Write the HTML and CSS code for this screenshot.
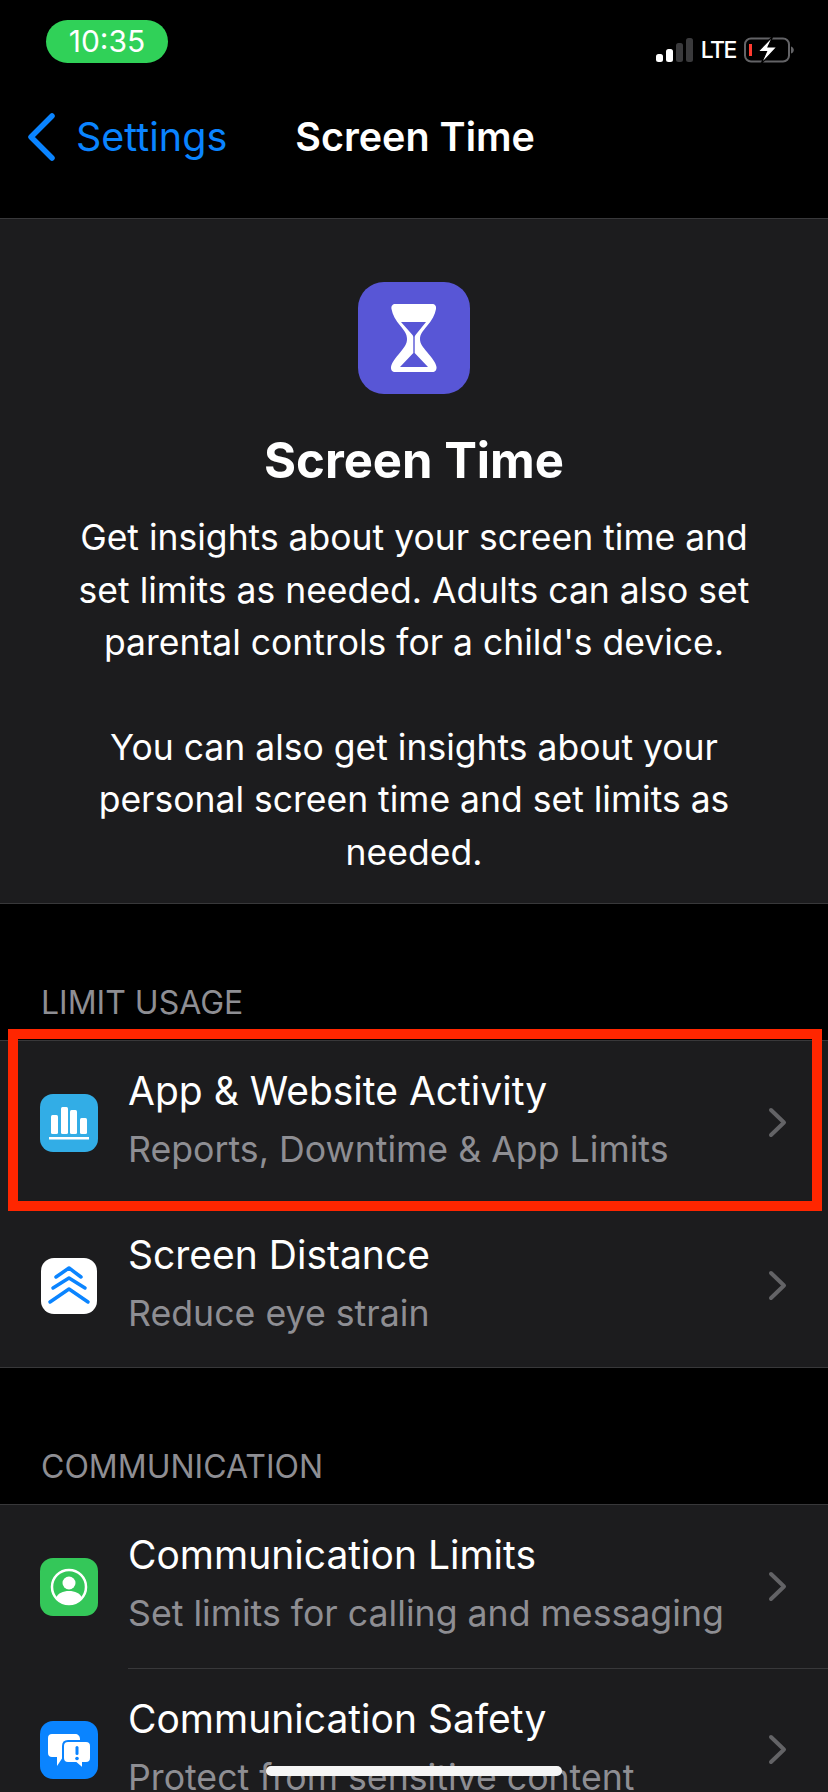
FILE: index.html
```html
<!DOCTYPE html>
<html lang="en">
<head>
    <meta charset="UTF-8">
    <meta name="viewport" content="width=device-width, initial-scale=1.0">
    <title>Screen Time</title>
    <link rel="stylesheet" href="styles.css">
</head>
<body>
    <header class="top">
        <div class="status">
            <span class="time">10:35</span>
            <div class="status-right">
                <svg class="signal" width="37" height="24" viewBox="0 0 37 24">
                    <rect x="0" y="16" width="7" height="8" rx="2.500" fill="#fff"/>
                    <rect x="10" y="11" width="7" height="13" rx="2.500" fill="#fff"/>
                    <rect x="20" y="5" width="7" height="19" rx="2.500" fill="#3a3a3c"/>
                    <rect x="30" y="0" width="7" height="24" rx="2.500" fill="#3a3a3c"/>
                </svg>
                <span class="lte">LTE</span>
                <svg class="battery" width="50" height="28" viewBox="0 0 50 28">
                    <rect x="1" y="2.500" width="44" height="23" rx="6" fill="none" stroke="#636366" stroke-width="2"/>
                    <rect x="5" y="8" width="3" height="12" fill="#ff3b30"/>
                    <path d="M47 10.500c1.800 .5 2.800 2 2.800 3.500s-1 3-2.800 3.500z" fill="#636366"/>
                    <path d="M29 0L14 15.500h8.500L17 28 33 11h-9z" fill="#fff" stroke="#000" stroke-width="1.200"/>
                </svg>
            </div>
        </div>
        <nav class="nav">
            <a class="back" href="#">
                <svg width="30" height="48" viewBox="0 0 30 48"><path d="M26 3L5 24l21 21" fill="none" stroke="#0a84ff" stroke-width="5.500" stroke-linecap="round" stroke-linejoin="round"/></svg>
                <span>Settings</span>
            </a>
            <h2>Screen Time</h2>
        </nav>
    </header>

    <section class="intro">
        <div class="app-icon">
            <svg width="112" height="112" viewBox="0 0 112 112">
                <path d="M37 22h37c3 0 4.500 2 4 5-1 6-4 11-9 17-4 5-7 8-7 13s3 8 7 13c5 6 9 11 9.500 15 .3 3-1.500 5-4 5H37c-2.500 0-4.300-2-4-5 .5-4 4.500-9 9.500-15 4-5 6.500-8 6.500-13s-2.500-8-6.500-13c-5-6-8-11-9-17-.5-3 1-5 4-5z" fill="#fff"/>
                <path d="M43 40h25L57.500 53c-.8 1-.8 2-.8 3v15L70 85H42l13.300-14V56c0-1 0-2-.8-3z" fill="#5856d6"/>
            </svg>
        </div>
        <h1>Screen Time</h1>
        <p>Get insights about your screen time and<br>set limits as needed. Adults can also set<br>parental controls for a child's device.</p>
        <p>You can also get insights about your<br>personal screen time and set limits as<br>needed.</p>
    </section>

    <div class="label">LIMIT USAGE</div>
    <ul class="group">
        <li class="row">
            <span class="icon icon-blue">
                <svg width="58" height="58" viewBox="0 0 58 58">
                    <rect x="11" y="21" width="7" height="19" rx="1.500" fill="#fff"/>
                    <rect x="21" y="13" width="7" height="27" rx="1.500" fill="#fff"/>
                    <rect x="30" y="16" width="7" height="24" rx="1.500" fill="#fff"/>
                    <rect x="40" y="24" width="7" height="16" rx="1.500" fill="#fff"/>
                    <rect x="9" y="43" width="40" height="2.500" fill="#fff"/>
                </svg>
            </span>
            <div class="text">
                <div class="name">App &amp; Website Activity</div>
                <div class="sub">Reports, Downtime &amp; App Limits</div>
            </div>
            <svg class="chev" width="19" height="31" viewBox="0 0 19 31"><path d="M3 3l13 12.500L3 28" fill="none" stroke="#636366" stroke-width="4" stroke-linecap="round" stroke-linejoin="round"/></svg>
        </li>
        <li class="row">
            <span class="icon icon-white">
                <svg width="56" height="56" viewBox="0 0 56 56">
                    <g fill="none" stroke="#0a84ff" stroke-width="3.500" stroke-linecap="round" stroke-linejoin="round">
                        <path d="M15 19l13-9 12 9"/>
                        <path d="M12 30l16-10 16 10"/>
                        <path d="M9 44l19-13 19 13"/>
                    </g>
                </svg>
            </span>
            <div class="text">
                <div class="name">Screen Distance</div>
                <div class="sub">Reduce eye strain</div>
            </div>
            <svg class="chev" width="19" height="31" viewBox="0 0 19 31"><path d="M3 3l13 12.500L3 28" fill="none" stroke="#636366" stroke-width="4" stroke-linecap="round" stroke-linejoin="round"/></svg>
        </li>
    </ul>

    <div class="label">COMMUNICATION</div>
    <ul class="group">
        <li class="row">
            <span class="icon icon-green">
                <svg width="58" height="58" viewBox="0 0 58 58">
                    <circle cx="29" cy="29" r="17" fill="none" stroke="#fff" stroke-width="2.500"/>
                    <circle cx="29" cy="25" r="6.500" fill="#fff"/>
                    <path d="M16 40c2-5 7-7 13-7s11 2 13 7c-3 3.500-8 6-13 6s-10-2.500-13-6z" fill="#fff"/>
                </svg>
            </span>
            <div class="text">
                <div class="name">Communication Limits</div>
                <div class="sub">Set limits for calling and messaging</div>
            </div>
            <svg class="chev" width="19" height="31" viewBox="0 0 19 31"><path d="M3 3l13 12.500L3 28" fill="none" stroke="#636366" stroke-width="4" stroke-linecap="round" stroke-linejoin="round"/></svg>
        </li>
        <li class="row">
            <span class="icon icon-azure">
                <svg width="58" height="58" viewBox="0 0 58 58">
                    <path d="M12 13h23c3 0 5 2 5 5v13c0 3-2 5-5 5H23l-6 9v-9h-5c-2.500 0-4-1.500-4-4V17c0-2.500 1.500-4 4-4z" fill="#fff"/>
                    <path d="M28 20h18c3 0 5 2 5 5v12c0 3-2 5-5 5h-3v6l-7-6h-8c-3 0-5-2-5-5V25c0-3 2-5 5-5z" fill="#fff" stroke="#0a84ff" stroke-width="2"/>
                    <rect x="35.500" y="25" width="3" height="9" rx="1.500" fill="#0a84ff"/>
                    <circle cx="37" cy="37.500" r="1.800" fill="#0a84ff"/>
                </svg>
            </span>
            <div class="text">
                <div class="name">Communication Safety</div>
                <div class="sub">Protect from sensitive content</div>
            </div>
            <svg class="chev" width="19" height="31" viewBox="0 0 19 31"><path d="M3 3l13 12.500L3 28" fill="none" stroke="#636366" stroke-width="4" stroke-linecap="round" stroke-linejoin="round"/></svg>
        </li>
    </ul>

    <div class="highlight"></div>
    <div class="home-bar"></div>
</body>
</html>
```

FILE: styles.css
```css
* {
    box-sizing: border-box;
}

html, body {
    height: 1792px;
    overflow: hidden;
}

body {
    margin: 0;
    position: relative;
    background-color: #000;
    color: #fff;
    font-family: Inter, "Liberation Sans", sans-serif;
}

.top {
    height: 219px;
    border-bottom: 1px solid #38383a;
}

.status {
    display: flex;
    justify-content: space-between;
    padding: 20px 34px 0 46px;
}

.time {
    width: 122px;
    height: 43px;
    border-radius: 22px;
    background-color: #30d158;
    font-size: 30px;
    line-height: 43px;
    text-align: center;
}

.status-right {
    display: flex;
    align-items: center;
    gap: 8px;
    height: 43px;
    margin-top: 8px;
}

.lte {
    font-size: 23px;
    font-weight: 500;
    letter-spacing: -1.500px;
}

.nav {
    display: flex;
    align-items: center;
    height: 48px;
    margin-top: 42px;
    padding-left: 26px;
}

.back {
    display: flex;
    align-items: center;
    gap: 20px;
    color: #0a84ff;
    text-decoration: none;
    font-size: 39.500px;
}

.nav h2 {
    margin: 0 0 0 68px;
    font-size: 39.500px;
    font-weight: 600;
}

.intro {
    height: 685px;
    padding-top: 63px;
    background-color: #1c1c1e;
    border-bottom: 1px solid #38383a;
    text-align: center;
}

.app-icon {
    width: 112px;
    height: 112px;
    margin: 0 auto;
    border-radius: 26px;
    background-color: #5856d6;
}

.intro h1 {
    margin: 37px 0 21px;
    font-size: 49px;
    line-height: 60px;
    font-weight: 700;
}

.intro p {
    margin: 0 0 52px;
    font-size: 35.500px;
    line-height: 52.500px;
}

.label {
    height: 136px;
    padding: 0 41px 18px;
    display: flex;
    align-items: flex-end;
    color: #8e8e93;
    font-size: 32px;
}

.group {
    list-style: none;
    margin: 0;
    padding: 0;
    background-color: #1c1c1e;
    border-top: 1px solid #38383a;
    border-bottom: 1px solid #38383a;
}

.row {
    display: flex;
    align-items: center;
    height: 163px;
    padding: 0 41px 0 40px;
}

.row + .row .text {
    padding-bottom: 3px;
}

.row + .row .text::before {
    content: "";
    position: absolute;
    top: 0;
    left: 0;
    right: -69px;
    border-top: 1px solid #38383a;
}

.group:first-of-type .row + .row .text::before {
    display: none;
}

.icon {
    flex: none;
    width: 58px;
    height: 58px;
    border-radius: 13px;
}

.icon svg {
    display: block;
}

.icon-blue {
    background-color: #32ade6;
}

.icon-white {
    width: 56px;
    height: 56px;
    margin: 0 1px;
    background-color: #fff;
}

.icon-green {
    background-color: #34c759;
}

.icon-azure {
    background-color: #0a84ff;
}

.text {
    position: relative;
    align-self: stretch;
    flex: 1;
    display: flex;
    flex-direction: column;
    justify-content: center;
    margin-left: 30px;
    padding-bottom: 5px;
}

.name {
    font-size: 39px;
    line-height: 50px;
}

.sub {
    margin-top: 8px;
    color: #8e8e93;
    font-size: 35.700px;
    line-height: 50px;
}

.highlight {
    position: absolute;
    left: 8px;
    top: 1029px;
    width: 814px;
    height: 182px;
    border: 10px solid #ff2600;
}

.home-bar {
    position: absolute;
    left: 266px;
    top: 1766px;
    width: 296px;
    height: 10px;
    border-radius: 5px;
    background-color: #f5f5f5;
}
```
